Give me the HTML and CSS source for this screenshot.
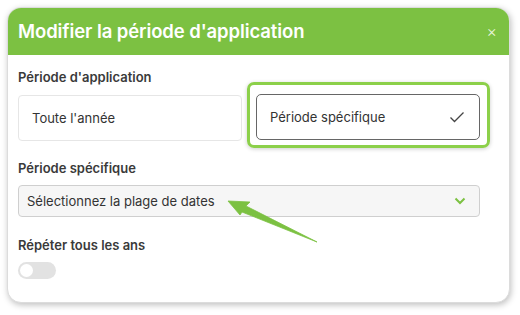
FILE: index.html
```html
<!DOCTYPE html>
<html lang="fr">
<head>
<meta charset="utf-8">
<link rel="stylesheet" href="styles.css">
</head>
<body>
<div class="modal">
  <div class="header">
    <h1 class="title">Modifier la période d'application</h1>
    <span class="close">×</span>
  </div>
  <div class="body">
    <div class="label">Période d'application</div>
    <div class="options">
      <div class="option">Toute l'année</div>
      <div class="option-wrap">
        <div class="option selected">
          <span>Période spécifique</span>
          <svg class="check" width="16" height="12" viewBox="0 0 16 12"><path d="M1.5 6.5 L5.5 10.5 L14.5 1.5" fill="none" stroke="#444" stroke-width="1.3"/></svg>
        </div>
      </div>
    </div>
    <div class="label label2">Période spécifique</div>
    <div class="select">
      <span>Sélectionnez la plage de dates</span>
      <svg width="12" height="8" viewBox="0 0 12 8"><path d="M1.5 1.5 L6 6 L10.5 1.5" fill="none" stroke="#7cc142" stroke-width="2"/></svg>
    </div>
    <div class="label label3">Répéter tous les ans</div>
    <div class="toggle"><div class="knob"></div></div>
    <svg class="arrow" width="94" height="46" viewBox="0 0 94 46"><path d="M1 1 L23 2 L19 6 L90 42 L15 12 L13 15 Z" fill="#7cc142" stroke="#7cc142" stroke-width="0.8" stroke-linejoin="round"/></svg>
  </div>
</div>
</body>
</html>
```
FILE: styles.css
```css
* { box-sizing: border-box; }
body {
  margin: 0;
  background: #fff;
  font-family: Inter, "Noto Sans", sans-serif;
  width: 520px;
  height: 315px;
  overflow: hidden;
}
.modal {
  margin: 7px 0 0 7px;
  width: 503px;
  height: 296px;
  border-radius: 14px;
  background: #fff;
  border: 1px solid #dcdcdc;
  box-shadow: 1px 2px 6px rgba(0,0,0,0.25);
  overflow: hidden;
  position: relative;
}
.header {
  background: #7cc142;
  height: 47px;
  display: flex;
  align-items: center;
  justify-content: space-between;
  padding: 0 12px 2px 10px;
}
.title {
  margin: 0;
  color: #fff;
  font-size: 18.5px;
  font-weight: 600;
  letter-spacing: -0.1px;
}
.close {
  color: #e8f5dc;
  font-size: 16px;
  font-weight: 300;
}
.body {
  padding: 14px 0 0 10px;
  position: relative;
}
.label {
  font-size: 13px;
  font-weight: 600;
  color: #3a3a3a;
  line-height: 16px;
}
.options {
  display: flex;
  align-items: flex-start;
  margin-top: 10px;
}
.option {
  width: 224px;
  height: 46px;
  border: 1px solid #e6e6e6;
  border-radius: 4px;
  display: flex;
  align-items: center;
  padding: 0 13px;
  font-size: 13px;
  color: #333;
}
.option-wrap {
  margin: -13px 0 -7px 5px;
  padding: 9px 7px 5px 6px;
  border: 3px solid #8cd04a;
  border-radius: 7px;
  box-shadow: 0 1px 4px rgba(0,0,0,0.2);
  width: 243px;
  height: 66px;
}
.option.selected {
  border: 1px solid #666;
  border-radius: 5px;
  justify-content: space-between;
  padding-right: 14px;
}
.label2 { margin-top: 19px; }
.select {
  margin-top: 9px;
  width: 462px;
  height: 32px;
  background: #f6f6f6;
  border: 1px solid #cfcfcf;
  border-radius: 4px;
  display: flex;
  align-items: center;
  justify-content: space-between;
  padding: 0 13px 0 8px;
  font-size: 13px;
  color: #333;
}
.label3 { margin-top: 20px; }
.toggle {
  margin-top: 9px;
  width: 38px;
  height: 17px;
  border-radius: 9px;
  background: #e2e2e2;
  position: relative;
}
.knob {
  position: absolute;
  left: 2px;
  top: 2px;
  width: 13px;
  height: 13px;
  border-radius: 50%;
  background: #fff;
}
.arrow {
  position: absolute;
  left: 219px;
  top: 145px;
}
```
